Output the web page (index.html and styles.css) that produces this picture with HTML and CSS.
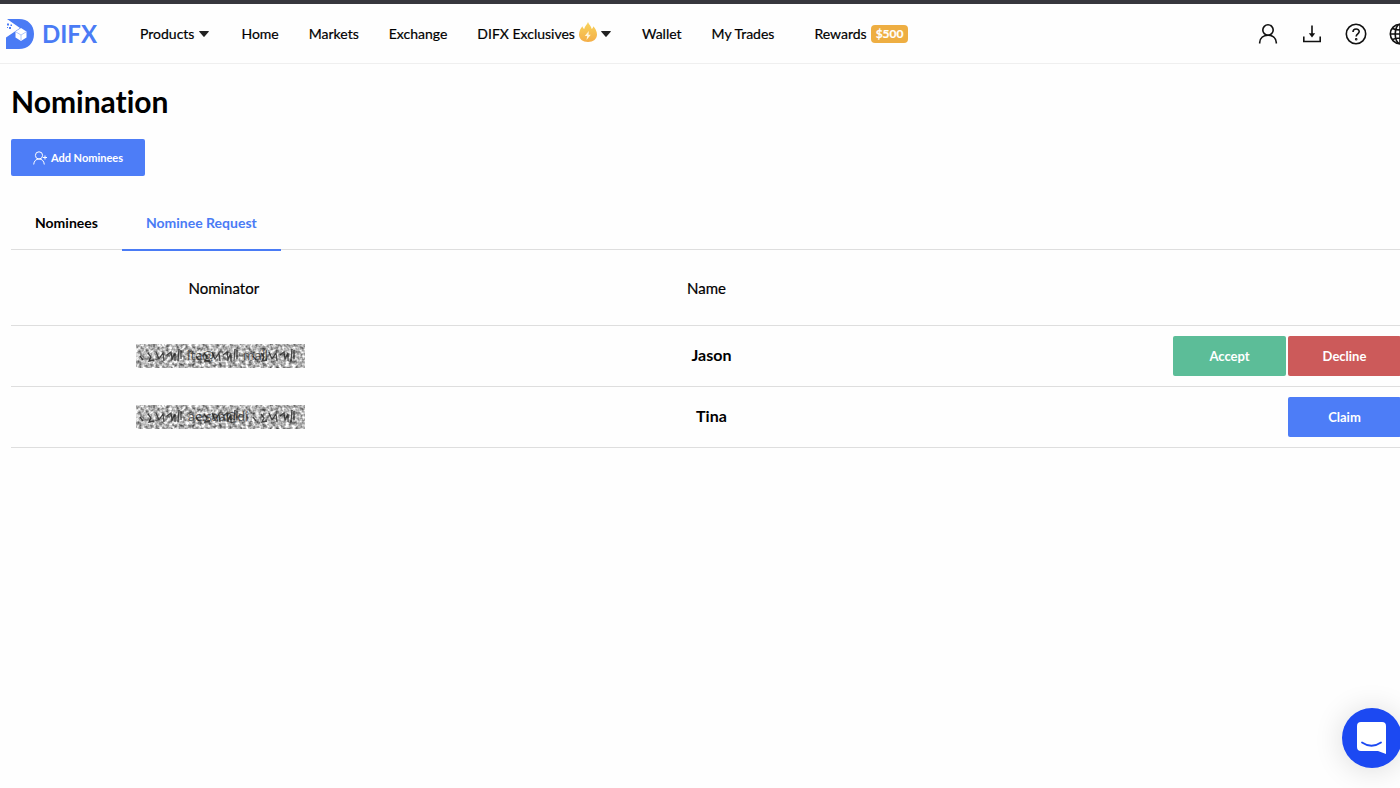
FILE: index.html
```html
<!DOCTYPE html>
<html lang="en">
<head>
<meta charset="utf-8">
<meta name="viewport" content="width=device-width, initial-scale=1">
<title>Nomination - DIFX</title>
<link rel="stylesheet" href="styles.css">
</head>
<body>
<header class="header">
  <a class="logo" href="#">
    <svg class="logo-mark" viewBox="0 0 28 30" aria-hidden="true">
      <path fill="#4a7bf5" d="M1 0h12c9 0 15 6 15 15s-6 15-15 15H0V18.500L14 9Z"/>
      <path fill="#fff" d="M9.500 12.500 15 9l5.500 3.500v6L15 22l-5.500-3.500Z"/>
      <path fill="none" stroke="#9db8fa" stroke-width=".8" d="m10 13 5 3 5-3M15 16v5.500"/>
      <path fill="#4a7bf5" d="M1 4.500h2v2H1zM4.500 5.500h1.500V7H4.500zM3 8h2v2H3zM1 8h1v1H1z"/>
    </svg>
    <span class="logo-text">DIFX</span>
  </a>
  <nav class="nav">
    <a class="nav-link nav-products" href="#">Products <svg class="caret" viewBox="0 0 10 6" aria-hidden="true"><path d="M.6 0h8.800q.8 0 .3.700L5.600 5.600q-.6.600-1.200 0L.3.700Q-.2 0 .6 0Z"/></svg></a>
    <a class="nav-link" href="#">Home</a>
    <a class="nav-link" href="#">Markets</a>
    <a class="nav-link" href="#">Exchange</a>
    <a class="nav-link nav-exclusives" href="#">DIFX Exclusives
      <svg class="flame" viewBox="0 0 18 20" aria-hidden="true">
        <defs><linearGradient id="fire" x1="0" y1="0" x2="0" y2="1"><stop offset="0" stop-color="#f8d45c"/><stop offset="1" stop-color="#f4ae48"/></linearGradient></defs>
        <path fill="url(#fire)" d="M9 0c.7 2.500 3.200 4 3.700 7 1-.6 1.500-1.500 1.600-2.700C16.300 6.500 18 9.500 18 12.500c0 4.500-3.700 7.500-9 7.500s-9-3-9-7.500c0-3 1.500-6 3.500-8.200.1 1.200.7 2.100 1.700 2.700C5.800 4 8.300 2.500 9 0Z"/>
        <path fill="#fff6dc" d="m9.800 9-4 5h2.400l-.7 4 4.300-5.200H9.500Z"/>
      </svg>
      <svg class="caret" viewBox="0 0 10 6" aria-hidden="true"><path d="M.6 0h8.800q.8 0 .3.700L5.600 5.600q-.6.600-1.200 0L.3.700Q-.2 0 .6 0Z"/></svg></a>
    <a class="nav-link" href="#">Wallet</a>
    <a class="nav-link" href="#">My Trades</a>
    <a class="nav-link nav-rewards" href="#">Rewards <span class="badge">$500</span></a>
  </nav>
  <div class="tools">
    <button class="tool" type="button" aria-label="Account"><svg viewBox="0 0 22 22"><circle cx="11" cy="7" r="5.200"/><path d="M2.700 20.500v-1C3 15 6.500 12.200 11 12.200s8 2.800 8.300 7.300v1"/></svg></button>
    <button class="tool" type="button" aria-label="Downloads"><svg viewBox="0 0 22 22"><path d="M11 2.500V12M2.800 13.500v5h16.400v-5"/><path fill="#111" stroke="none" d="M7.800 10.300h6.400L11 14.500Z"/></svg></button>
    <button class="tool" type="button" aria-label="Help"><svg viewBox="0 0 22 22"><circle cx="11" cy="11" r="9.700"/><path d="M8 9c0-4 6.200-4 6.200-.4 0 2.300-3 2.300-3 5"/><circle cx="11.200" cy="16.200" r=".5"/></svg></button>
    <button class="tool" type="button" aria-label="Language"><svg viewBox="0 0 22 22"><circle cx="11" cy="11" r="9.700"/><ellipse cx="11" cy="11" rx="4.800" ry="9.700"/><path d="M11 1.300v19.400M1.300 11h19.400M3.500 5.500c4 2 11 2 15 0M3.500 16.500c4-2 11-2 15 0"/></svg></button>
  </div>
</header>

<main class="page">
  <h1 class="title">Nomination</h1>
  <button class="btn btn-add" type="button">
    <svg class="add-icon" viewBox="0 0 14 14" aria-hidden="true"><circle cx="6" cy="4.400" r="3.600"/><path d="M.7 13.500C1 10 3 8 6 8s5 2 5.300 5.500M12 4.500v4M10 6.500h4"/></svg>
    Add Nominees
  </button>
  <div class="tabs" role="tablist">
    <button class="tab" type="button" role="tab" aria-selected="false">Nominees</button>
    <button class="tab tab-active" type="button" role="tab" aria-selected="true">Nominee Request</button>
  </div>
  <table class="requests">
    <thead>
      <tr><th class="col-nominator">Nominator</th><th class="col-name">Name</th><th class="col-actions" aria-label="Actions"></th></tr>
    </thead>
    <tbody>
      <tr>
        <td class="cell-nominator">
          <svg class="redacted" viewBox="0 0 169 24" role="img" aria-label="Hidden email">
            <defs>
              <filter id="grain" x="0" y="0" width="100%" height="100%" color-interpolation-filters="sRGB">
                <feTurbulence type="fractalNoise" baseFrequency=".3" numOctaves="2" seed="7"/>
                <feColorMatrix values="1.300 0 0 0 .06  1.300 0 0 0 .06  1.300 0 0 0 .06  0 0 0 0 1"/>
              </filter>
              <g id="scribble" fill="none" stroke="#222" stroke-opacity=".8" stroke-width="1.300">
                <path d="M4 12l3 4m5-7 3 4-2 4 5-1m2-8 3 7 4-6 1 8m3-6 4-3 1 7 3-6v8m4-12-1 12m3-11v9"/>
              </g>
            </defs>
            <rect width="169" height="24" filter="url(#grain)"/>
            <use href="#scribble"/><use href="#scribble" x="56"/><use href="#scribble" x="113"/>
            <text class="trace" x="51" y="16">ita@</text><text class="trace" x="107" y="16">mail</text>
          </svg>
        </td>
        <td class="cell-name">Jason</td>
        <td class="cell-actions"><div class="actions"><button class="btn btn-accept" type="button">Accept</button><button class="btn btn-decline" type="button">Decline</button></div></td>
      </tr>
      <tr>
        <td class="cell-nominator">
          <svg class="redacted" viewBox="0 0 169 24" role="img" aria-label="Hidden email">
            <rect width="169" height="24" filter="url(#grain)"/>
            <use href="#scribble"/><use href="#scribble" x="56"/><use href="#scribble" x="113"/>
            <text class="trace" x="52" y="16">ae.saa@di</text>
          </svg>
        </td>
        <td class="cell-name">Tina</td>
        <td class="cell-actions"><div class="actions"><button class="btn btn-claim" type="button">Claim</button></div></td>
      </tr>
    </tbody>
  </table>
</main>

<button class="chat" type="button" aria-label="Open chat">
  <svg viewBox="0 0 30 32" aria-hidden="true"><path fill="#fff" d="M4 0h21q4 0 4 4v28l-8-3H4q-4 0-4-4V4q0-4 4-4Z"/><path fill="none" stroke="#1c49f2" stroke-width="1.800" stroke-linecap="round" d="M5 20.500q9.500 6.500 19 0"/></svg>
</button>
</body>
</html>
```
FILE: styles.css
```css
* { box-sizing: border-box; }
body {
  margin: 0;
  min-height: 100vh;
  overflow-x: hidden;
  background: #fefefe;
  color: #000;
  font-family: Lato, "Liberation Sans", sans-serif;
  font-size: 14px;
  font-variant-ligatures: none;
}
button { border: 0; padding: 0; background: none; font: inherit; color: inherit; cursor: pointer; }
a { color: inherit; text-decoration: none; }

.header {
  display: flex;
  align-items: center;
  height: 64px;
  padding-left: 6px;
  border-top: 4px solid #37373d;
  border-bottom: 1px solid #efefef;
  overflow: hidden;
}
.logo { display: flex; align-items: center; gap: 8px; width: 134px; color: #4a7bf5; }
.logo-mark { width: 28px; height: 30px; }
.logo-text { font-size: 24px; font-weight: 700; line-height: 30px; }
.nav { display: flex; align-items: center; gap: 30px; white-space: nowrap; }
.nav-link { display: flex; align-items: center; gap: 5px; line-height: 20px; -webkit-text-stroke: .2px; }
.nav-products { margin-right: 2px; }
.nav-exclusives { gap: 4px; margin-right: 1px; }
.caret { width: 10px; height: 6px; fill: #222; }
.flame { width: 18px; height: 20px; margin-bottom: 4px; }
.nav-rewards { gap: 4px; margin-left: 10px; }
.badge { padding: 0 5px; border-radius: 4px; background: #eeae42; color: #fff; font-size: 12px; font-weight: 700; line-height: 18px; }
.tools { display: flex; gap: 22px; margin-left: auto; margin-right: -11px; }
.tool { display: flex; }
.tool svg { width: 22px; height: 22px; fill: none; stroke: #111; stroke-width: 1.6; }

.page { padding-left: 11px; }
.title { margin: 19px 0 20px; font-size: 30px; font-weight: 700; line-height: 36px; }
.btn { border-radius: 2px; color: #fff; font-weight: 700; }
.btn-add { display: flex; align-items: center; justify-content: center; gap: 4px; width: 134px; height: 37px; background: #4d7df7; font-size: 11px; }
.add-icon { width: 14px; height: 14px; fill: none; stroke: #fff; }

.tabs { display: flex; height: 74px; border-bottom: 1px solid #dedede; }
.tab { height: 75px; padding: 20px 24px 0; border-bottom: 2px solid transparent; font-size: 14px; font-weight: 700; line-height: 28px; }
.tab-active { border-bottom-color: #4a7bf5; color: #4a7bf5; }

.requests { width: 100%; border-collapse: collapse; table-layout: fixed; font-size: 15px; }
.requests th { height: 75px; padding: 2px 0 0; font-weight: 400; -webkit-text-stroke: .2px; }
.requests tr { border-bottom: 1px solid #dedede; }
.requests td { height: 61px; padding: 0; text-align: center; }
.requests .col-nominator { width: 31%; padding-right: 5px; }
.requests .col-name { width: 39%; padding-right: 12px; }
.requests .cell-nominator { padding-right: 12px; }
.requests .cell-name { padding-right: 2px; padding-bottom: 2px; font-size: 16px; font-weight: 700; }
.redacted { display: block; width: 169px; height: 24px; margin: 0 auto; }
.trace { fill: #222; fill-opacity: .7; font-size: 14px; }
.actions { display: flex; justify-content: flex-end; gap: 2px; margin-right: -1px; }
.actions .btn { width: 113px; height: 40px; font-size: 13px; }
.btn-accept { background: #5cbd98; }
.btn-decline { background: #cc5a5a; }
.btn-claim { background: #4d7df7; }

.chat {
  position: fixed;
  right: -2px;
  bottom: 20px;
  display: flex;
  align-items: center;
  justify-content: center;
  width: 60px;
  height: 60px;
  border-radius: 50%;
  background: #1c49f2;
  box-shadow: 0 2px 30px rgba(0, 0, 0, .14);
}
.chat svg { width: 30px; height: 32px; }
```
